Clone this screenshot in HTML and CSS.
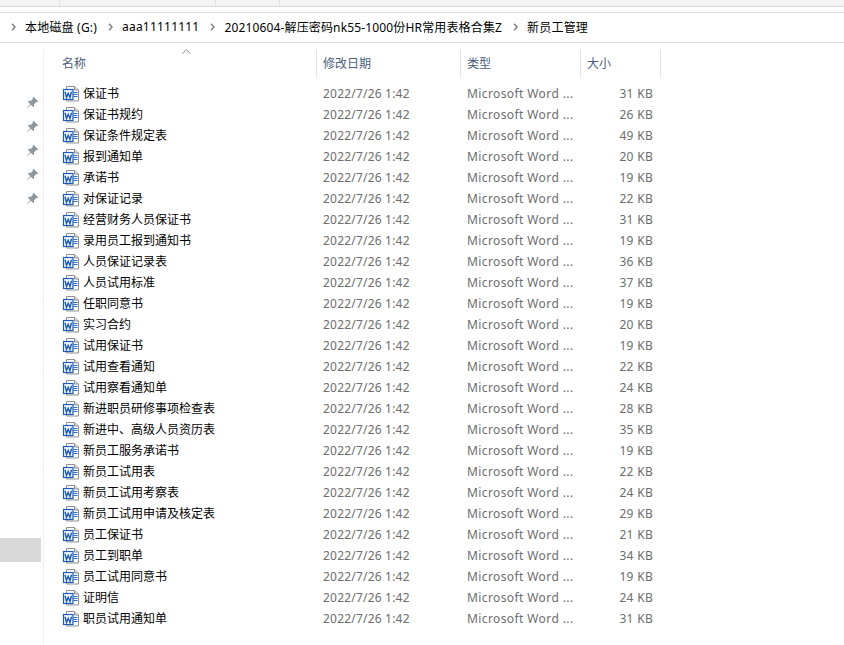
FILE: index.html
```html
<!DOCTYPE html>
<html>
<head>
<title>新员工管理</title>
<meta charset="UTF-8">
<link rel="stylesheet" href="styles.css">
</head>
<body>

<svg class="defs" width="0" height="0">
  <symbol id="pin" viewBox="0 0 12 12">
    <path d="M7 .6l4.400 4.400-1 .8-.8-.3-2.200 2.200.2 1.700-.9.8-2.200-2.200L1 11.400l-.4-.4 3.400-3.500L1.800 5.300l.8-.9 1.700.2 2.200-2.200-.3-.8z" fill="#8e979f"/>
  </symbol>
  <symbol id="chev" viewBox="0 0 5 8">
    <polyline points="1,.8 4,4 1,7.200" fill="none" stroke="#808080" stroke-width="1.500"/>
  </symbol>
  <symbol id="doc" viewBox="0 0 17 17">
    <path d="M4.500 1.500h8l4 3.500v11h-12z" fill="#fff" stroke="#8f8f8f"/>
    <path d="M12.500 1.500v3.500h4" fill="#dcdcdc" stroke="#8f8f8f"/>
    <path d="M11.500 7.500h4M11.500 9.500h4M11.500 11.500h4" stroke="#2f6fc0"/>
    <rect x="1.500" y="4.500" width="9.500" height="10" fill="#f4f8fd" stroke="#1d5bb5" stroke-width="1.200"/>
    <polyline points="3,6.800 4.500,12.500 6.200,8.300 8,12.500 9.500,6.800" fill="none" stroke="#1d5bb5" stroke-width="1.400"/>
  </symbol>
</svg>

<!-- window top -->
<div class="ribbon">
  <div class="ribbon-cell first"></div>
  <div class="ribbon-cell second"></div>
  <div class="ribbon-cell third"></div>
</div>

<!-- address bar -->
<div class="crumbs">
  <span class="sep"><svg width="5" height="8"><use href="#chev"/></svg></span><span class="crumb">本地磁盘 (G:)</span>
  <span class="sep"><svg width="5" height="8"><use href="#chev"/></svg></span><span class="crumb">aaa11111111</span>
  <span class="sep"><svg width="5" height="8"><use href="#chev"/></svg></span><span class="crumb long">20210604-解压密码nk55-1000份HR常用表格合集Z</span>
  <span class="sep"><svg width="5" height="8"><use href="#chev"/></svg></span><span class="crumb">新员工管理</span>
</div>

<div class="content">
  <div class="side">
    <div class="pin"><svg width="13" height="13"><use href="#pin"/></svg></div>
    <div class="pin"><svg width="13" height="13"><use href="#pin"/></svg></div>
    <div class="pin"><svg width="13" height="13"><use href="#pin"/></svg></div>
    <div class="pin"><svg width="13" height="13"><use href="#pin"/></svg></div>
    <div class="pin"><svg width="13" height="13"><use href="#pin"/></svg></div>
    <div class="selected"></div>
  </div>

  <div class="list">
    <div class="head">
      <div class="head-cell name-head">名称
        <svg class="sort" width="9" height="5"><polyline points="0.500,4.500 4.500,0.800 8.500,4.500" fill="none" stroke="#8a8a8a"/></svg>
      </div>
      <div class="head-cell">修改日期</div>
      <div class="head-cell">类型</div>
      <div class="head-cell">大小</div>
    </div>

    <div class="row"><div class="name"><svg width="17" height="17"><use href="#doc"/></svg>保证书</div><div class="date">2022/7/26 1:42</div><div class="type">Microsoft Word ...</div><div class="size">31 KB</div></div>
    <div class="row"><div class="name"><svg width="17" height="17"><use href="#doc"/></svg>保证书规约</div><div class="date">2022/7/26 1:42</div><div class="type">Microsoft Word ...</div><div class="size">26 KB</div></div>
    <div class="row"><div class="name"><svg width="17" height="17"><use href="#doc"/></svg>保证条件规定表</div><div class="date">2022/7/26 1:42</div><div class="type">Microsoft Word ...</div><div class="size">49 KB</div></div>
    <div class="row"><div class="name"><svg width="17" height="17"><use href="#doc"/></svg>报到通知单</div><div class="date">2022/7/26 1:42</div><div class="type">Microsoft Word ...</div><div class="size">20 KB</div></div>
    <div class="row"><div class="name"><svg width="17" height="17"><use href="#doc"/></svg>承诺书</div><div class="date">2022/7/26 1:42</div><div class="type">Microsoft Word ...</div><div class="size">19 KB</div></div>
    <div class="row"><div class="name"><svg width="17" height="17"><use href="#doc"/></svg>对保证记录</div><div class="date">2022/7/26 1:42</div><div class="type">Microsoft Word ...</div><div class="size">22 KB</div></div>
    <div class="row"><div class="name"><svg width="17" height="17"><use href="#doc"/></svg>经营财务人员保证书</div><div class="date">2022/7/26 1:42</div><div class="type">Microsoft Word ...</div><div class="size">31 KB</div></div>
    <div class="row"><div class="name"><svg width="17" height="17"><use href="#doc"/></svg>录用员工报到通知书</div><div class="date">2022/7/26 1:42</div><div class="type">Microsoft Word ...</div><div class="size">19 KB</div></div>
    <div class="row"><div class="name"><svg width="17" height="17"><use href="#doc"/></svg>人员保证记录表</div><div class="date">2022/7/26 1:42</div><div class="type">Microsoft Word ...</div><div class="size">36 KB</div></div>
    <div class="row"><div class="name"><svg width="17" height="17"><use href="#doc"/></svg>人员试用标准</div><div class="date">2022/7/26 1:42</div><div class="type">Microsoft Word ...</div><div class="size">37 KB</div></div>
    <div class="row"><div class="name"><svg width="17" height="17"><use href="#doc"/></svg>任职同意书</div><div class="date">2022/7/26 1:42</div><div class="type">Microsoft Word ...</div><div class="size">19 KB</div></div>
    <div class="row"><div class="name"><svg width="17" height="17"><use href="#doc"/></svg>实习合约</div><div class="date">2022/7/26 1:42</div><div class="type">Microsoft Word ...</div><div class="size">20 KB</div></div>
    <div class="row"><div class="name"><svg width="17" height="17"><use href="#doc"/></svg>试用保证书</div><div class="date">2022/7/26 1:42</div><div class="type">Microsoft Word ...</div><div class="size">19 KB</div></div>
    <div class="row"><div class="name"><svg width="17" height="17"><use href="#doc"/></svg>试用查看通知</div><div class="date">2022/7/26 1:42</div><div class="type">Microsoft Word ...</div><div class="size">22 KB</div></div>
    <div class="row"><div class="name"><svg width="17" height="17"><use href="#doc"/></svg>试用察看通知单</div><div class="date">2022/7/26 1:42</div><div class="type">Microsoft Word ...</div><div class="size">24 KB</div></div>
    <div class="row"><div class="name"><svg width="17" height="17"><use href="#doc"/></svg>新进职员研修事项检查表</div><div class="date">2022/7/26 1:42</div><div class="type">Microsoft Word ...</div><div class="size">28 KB</div></div>
    <div class="row"><div class="name"><svg width="17" height="17"><use href="#doc"/></svg>新进中、高级人员资历表</div><div class="date">2022/7/26 1:42</div><div class="type">Microsoft Word ...</div><div class="size">35 KB</div></div>
    <div class="row"><div class="name"><svg width="17" height="17"><use href="#doc"/></svg>新员工服务承诺书</div><div class="date">2022/7/26 1:42</div><div class="type">Microsoft Word ...</div><div class="size">19 KB</div></div>
    <div class="row"><div class="name"><svg width="17" height="17"><use href="#doc"/></svg>新员工试用表</div><div class="date">2022/7/26 1:42</div><div class="type">Microsoft Word ...</div><div class="size">22 KB</div></div>
    <div class="row"><div class="name"><svg width="17" height="17"><use href="#doc"/></svg>新员工试用考察表</div><div class="date">2022/7/26 1:42</div><div class="type">Microsoft Word ...</div><div class="size">24 KB</div></div>
    <div class="row"><div class="name"><svg width="17" height="17"><use href="#doc"/></svg>新员工试用申请及核定表</div><div class="date">2022/7/26 1:42</div><div class="type">Microsoft Word ...</div><div class="size">29 KB</div></div>
    <div class="row"><div class="name"><svg width="17" height="17"><use href="#doc"/></svg>员工保证书</div><div class="date">2022/7/26 1:42</div><div class="type">Microsoft Word ...</div><div class="size">21 KB</div></div>
    <div class="row"><div class="name"><svg width="17" height="17"><use href="#doc"/></svg>员工到职单</div><div class="date">2022/7/26 1:42</div><div class="type">Microsoft Word ...</div><div class="size">34 KB</div></div>
    <div class="row"><div class="name"><svg width="17" height="17"><use href="#doc"/></svg>员工试用同意书</div><div class="date">2022/7/26 1:42</div><div class="type">Microsoft Word ...</div><div class="size">19 KB</div></div>
    <div class="row"><div class="name"><svg width="17" height="17"><use href="#doc"/></svg>证明信</div><div class="date">2022/7/26 1:42</div><div class="type">Microsoft Word ...</div><div class="size">24 KB</div></div>
    <div class="row"><div class="name"><svg width="17" height="17"><use href="#doc"/></svg>职员试用通知单</div><div class="date">2022/7/26 1:42</div><div class="type">Microsoft Word ...</div><div class="size">31 KB</div></div>
  </div>
</div>

</body>
</html>
```

FILE: styles.css
```css
* {
  box-sizing: border-box;
}

body {
  margin: 0;
  height: 645px;
  overflow: hidden;
  background: #fff;
  font-family: "Noto Sans", "Noto Sans CJK SC", sans-serif;
  font-size: 12px;
  color: #000;
}

.defs {
  position: absolute;
}

/* window top */
.ribbon {
  display: flex;
  height: 7px;
  background: #f3f4f6;
  border-bottom: 1px solid #d9d9d9;
}

.ribbon-cell {
  height: 6px;
  border-right: 1px solid #e4e4e4;
}

.first {
  width: 60px;
}

.second {
  width: 156px;
}

.third {
  width: 64px;
}

/* address bar */
.crumbs {
  display: flex;
  align-items: center;
  height: 31px;
  margin-top: 5px;
  padding-left: 11px;
  padding-bottom: 2px;
  border-top: 1px solid #d9d9d9;
  border-bottom: 1px solid #d9d9d9;
  white-space: nowrap;
}

.sep {
  display: flex;
  align-items: center;
  width: 14px;
}

.crumb {
  margin-right: 11px;
  letter-spacing: 0.2px;
}

.long {
  letter-spacing: 0.15px;
}

.content {
  display: flex;
  padding-top: 7px;
}

/* pinned items */
.side {
  width: 44px;
  height: 595px;
  padding-top: 40px;
  border-right: 1px solid #f0f0f0;
}

.pin {
  display: flex;
  justify-content: center;
  align-items: center;
  height: 24px;
  padding-left: 22px;
  padding-right: 1px;
}

.selected {
  width: 41px;
  height: 24px;
  margin-top: 328px;
  background: #d9d9d9;
}

/* file list */
.list {
  flex: 1;
}

.head {
  display: grid;
  grid-template-columns: 273px 144px 120px 80px;
  height: 27px;
}

.head-cell {
  position: relative;
  padding-left: 6px;
  padding-top: 5px;
  line-height: 17px;
  color: #4c607a;
  border-right: 1px solid #e3e3e3;
}

.name-head {
  padding-left: 18px;
}

.sort {
  position: absolute;
  left: 138px;
  top: -1px;
}

.row {
  display: grid;
  grid-template-columns: 273px 144px 120px 72px;
  align-items: center;
  height: 21px;
  line-height: 21px;
  color: #6d6d6d;
}

.head + .row {
  margin-top: 6px;
}

.name {
  display: flex;
  align-items: center;
  gap: 4px;
  padding-left: 18px;
  color: #000;
}

.date {
  padding-left: 6px;
  letter-spacing: 0.2px;
}

.type {
  padding-left: 6px;
  letter-spacing: 0.4px;
}

.size {
  text-align: right;
  letter-spacing: 0.3px;
}
```
